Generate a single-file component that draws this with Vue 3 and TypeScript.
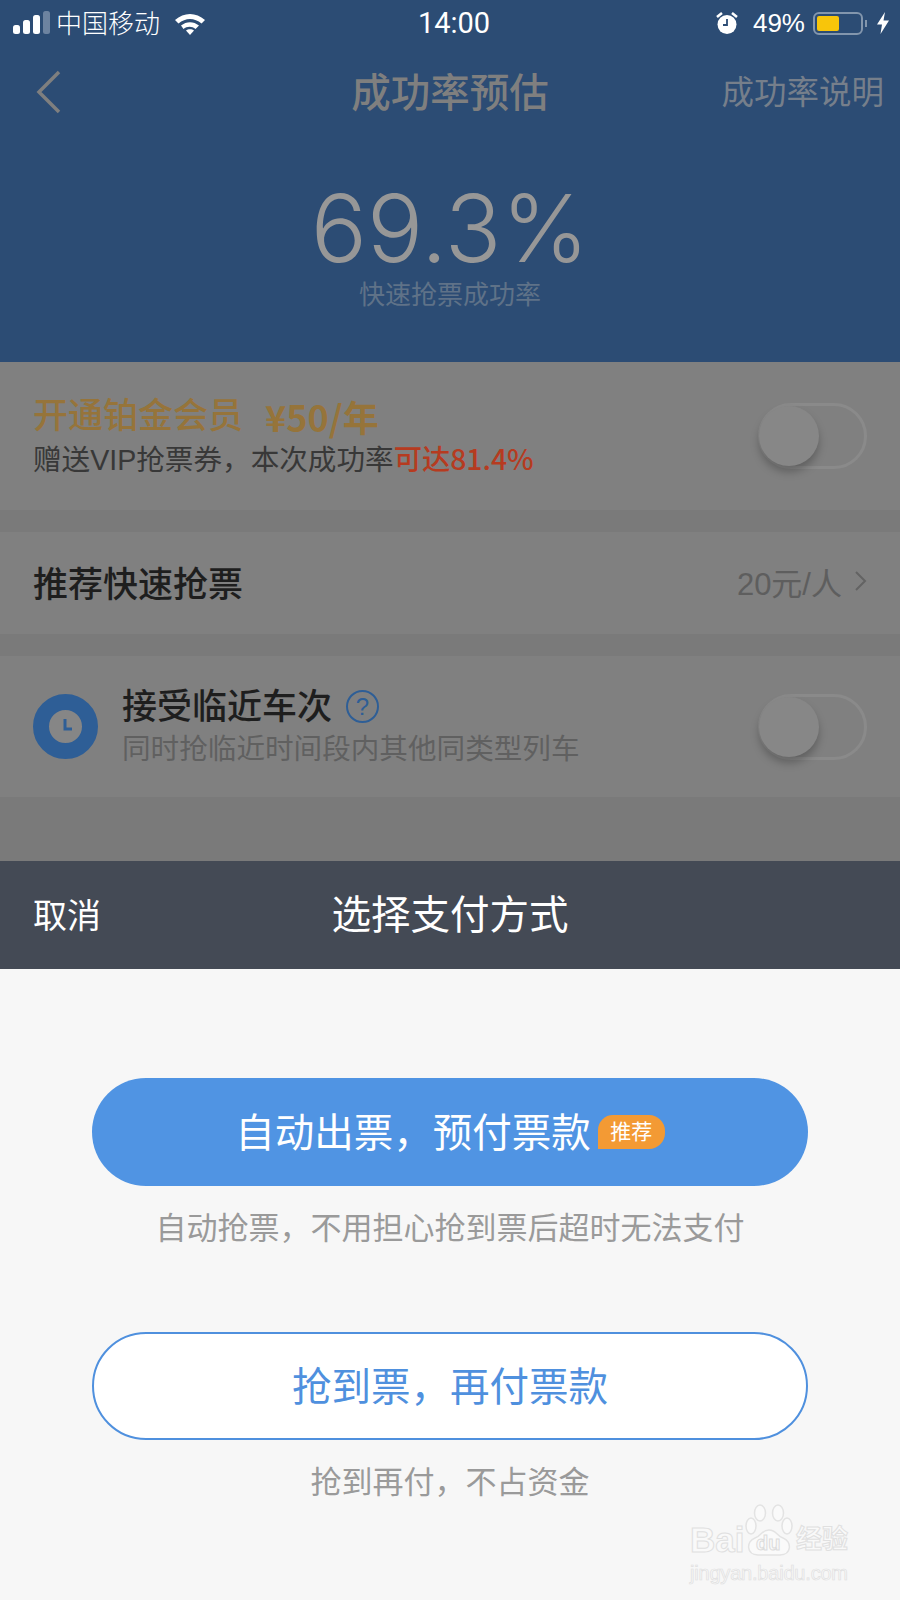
<script setup lang="ts">
const pawToes = [
  { cx: 15, cy: 9, rx: 5.5, ry: 8 },
  { cx: 33, cy: 9, rx: 5.5, ry: 8 },
  { cx: 6, cy: 22, rx: 5, ry: 8 },
  { cx: 42, cy: 22, rx: 5, ry: 8 },
]
</script>

<template>
  <div class="page">
    <header class="top">
      <div class="status">
        <div class="status__left">
          <svg class="signal" width="37" height="24" viewBox="0 0 37 24">
            <rect x="0" y="14" width="7" height="9" rx="2.5" fill="#fff" />
            <rect x="10" y="9" width="7" height="14" rx="2.5" fill="#fff" />
            <rect x="20" y="4" width="7" height="19" rx="2.5" fill="#fff" />
            <rect x="30" y="0" width="7" height="23" rx="2.5" fill="#6d83a0" />
          </svg>
          <span class="carrier">中国移动</span>
          <svg class="wifi" width="30" height="23" viewBox="0 0 30 23">
            <path d="M0 8C9 0 21 0 30 8l-3.500 3.500C19.500 5.500 10.500 5.500 3.500 11.500z" fill="#fff" />
            <path d="M6 13.500C11.500 9 18.500 9 24 13.500l-3.500 3.500c-3.500-3-8.500-3-12 0z" fill="#fff" />
            <path d="M11 18.500c2-1.800 6-1.800 8 0L15 23z" fill="#fff" />
          </svg>
        </div>
        <span class="clock">14:00</span>
        <div class="status__right">
          <svg width="24" height="24" viewBox="0 0 24 24">
            <circle cx="12" cy="13.500" r="9.500" fill="#fff" />
            <path d="M2 6l5-4M22 6l-5-4" stroke="#fff" stroke-width="2.600" />
            <path d="M12 8v6h-4" fill="none" stroke="#2c4c74" stroke-width="1.800" />
          </svg>
          <span class="percent">49%</span>
          <div class="battery"><div class="battery__fill" /></div>
          <span class="battery__nub" />
          <svg class="bolt" width="12" height="22" viewBox="0 0 12 22">
            <path d="M8 0L0 12.500h5L3.500 22 12 8.500H6.500z" fill="#fff" />
          </svg>
        </div>
      </div>

      <nav class="nav">
        <svg class="nav__back" width="26" height="44" viewBox="0 0 26 44">
          <path d="M23 2L3 22l20 20" fill="none" stroke="#7f7f7f" stroke-width="3.500" />
        </svg>
        <span class="nav__title">成功率预估</span>
        <span class="nav__link">成功率说明</span>
      </nav>

      <div class="hero">
        <div class="hero__value">69.3%</div>
        <div class="hero__label">快速抢票成功率</div>
      </div>
    </header>

    <section class="row row--vip">
      <div class="row__body">
        <div class="vip-title"><span>开通铂金会员</span><span class="vip-price">¥50/年</span></div>
        <div class="vip-sub">赠送VIP抢票券，本次成功率<span class="vip-hot">可达81.4%</span></div>
      </div>
      <div class="toggle"><div class="toggle__knob" /></div>
    </section>

    <section class="row row--quick">
      <div class="row__title">推荐快速抢票</div>
      <div class="quick-price">
        <span>20元/人</span>
        <svg width="13" height="22" viewBox="0 0 13 22">
          <path d="M2 2l9 9-9 9" fill="none" stroke="#636363" stroke-width="2" />
        </svg>
      </div>
    </section>

    <section class="row row--near">
      <div class="near-icon">
        <svg width="65" height="65" viewBox="0 0 65 65">
          <circle cx="32.500" cy="32.500" r="24.500" fill="#868686" stroke="#2e5e96" stroke-width="16" />
          <path d="M32 25v10h7" fill="none" stroke="#2e5e96" stroke-width="3" />
        </svg>
      </div>
      <div class="row__body">
        <div class="near-title">
          <span class="row__title">接受临近车次</span>
          <span class="help">?</span>
        </div>
        <div class="near-sub">同时抢临近时间段内其他同类型列车</div>
      </div>
      <div class="toggle"><div class="toggle__knob" /></div>
    </section>

    <div class="spacer" />

    <section class="sheet">
      <div class="sheet__head">
        <span class="sheet__cancel">取消</span>
        <span class="sheet__title">选择支付方式</span>
      </div>
      <div class="sheet__body">
        <button class="pay pay--primary">
          <span class="pay__text">自动出票，预付票款</span>
          <span class="pay__tag">推荐</span>
        </button>
        <p class="pay__hint">自动抢票，不用担心抢到票后超时无法支付</p>
        <button class="pay pay--outline"><span class="pay__text">抢到票，再付票款</span></button>
        <p class="pay__hint">抢到再付，不占资金</p>

        <div class="mark">
          <div class="mark__logo">
            <span class="mark__word">Bai</span>
            <svg class="mark__paw" width="48" height="52" viewBox="0 0 48 52">
              <ellipse
                v-for="toe in pawToes"
                :key="toe.cx"
                :cx="toe.cx"
                :cy="toe.cy"
                :rx="toe.rx"
                :ry="toe.ry"
                fill="#fafafa"
                stroke="#e3e3e3"
                stroke-width="1.500"
              />
              <path d="M24 26C16 26 17 32 10 34 1 37 1 51 13 51h22c12 0 12-14 3-17-7-2-6-8-14-8z" fill="#fafafa" stroke="#e3e3e3" stroke-width="1.500" />
            </svg>
            <span class="mark__du">du</span>
            <span class="mark__cn">经验</span>
          </div>
          <div class="mark__url">jingyan.baidu.com</div>
        </div>
      </div>
    </section>
  </div>
</template>

<style>
html,
body {
  margin: 0;
  background: #f7f7f7;
}
</style>

<style scoped>
.page {
  width: 900px;
  height: 1600px;
  display: flex;
  flex-direction: column;
  overflow: hidden;
  background: #7a7a7a;
  font-family: "Liberation Sans", "Noto Sans CJK SC", sans-serif;
}

.top {
  height: 362px;
  background: #2c4c74;
  display: flex;
  flex-direction: column;
}

.status {
  height: 46px;
  padding: 0 11px 0 13px;
  display: grid;
  grid-template-columns: 1fr auto 1fr;
  align-items: center;
  color: #fff;
  font-size: 26px;
}

.status__left,
.status__right {
  display: flex;
  align-items: center;
}

.status__right {
  justify-content: flex-end;
}

.carrier {
  margin: 0 0 4px 6px;
  font-weight: 300;
}

.wifi {
  margin-left: 15px;
}

.clock {
  margin-left: 6px;
  font-family: Roboto, sans-serif;
  font-size: 29px;
  font-weight: 400;
}

.percent {
  margin: 0 8px 0 14px;
  font-family: "Liberation Sans", sans-serif;
  font-size: 26px;
}

.battery {
  width: 50px;
  height: 23px;
  box-sizing: border-box;
  padding: 2px;
  border: 2px solid #8396ad;
  border-radius: 6px;
}

.battery__fill {
  width: 22px;
  height: 100%;
  border-radius: 2px;
  background: #f8c50a;
}

.battery__nub {
  width: 2px;
  height: 7px;
  margin-left: 2px;
  background: #8396ad;
}

.bolt {
  margin-left: 10px;
}

.nav {
  height: 92px;
  box-sizing: border-box;
  padding: 0 16px 6px 36px;
  display: flex;
  align-items: center;
  justify-content: space-between;
  position: relative;
}

.nav__back {
  margin-top: 6px;
}

.nav__title {
  position: absolute;
  left: 0;
  right: 0;
  text-align: center;
  font-size: 39.500px;
  font-weight: 500;
  color: #7f7f7f;
}

.nav__link {
  font-size: 32.500px;
  color: #767f8b;
}

.hero {
  text-align: center;
}

.hero__value {
  margin-top: 40px;
  font-family: Inter, sans-serif;
  font-size: 93.500px;
  font-weight: 300;
  line-height: 100px;
  color: #979797;
}

.hero__label {
  font-size: 26px;
  line-height: 34px;
  color: #5f7288;
}

.row {
  display: flex;
  align-items: center;
  background: #808080;
  padding: 0 33px;
}

.row__body {
  flex: 1;
}

.row__title {
  font-size: 35px;
  font-weight: 500;
  color: #1e1e1e;
}

.row--vip {
  height: 148px;
  margin-bottom: 22px;
}

.row--quick {
  height: 102px;
  padding-bottom: 4px;
  box-sizing: border-box;
  margin-bottom: 22px;
  justify-content: space-between;
}

.row--near {
  height: 141px;
}

.vip-title {
  display: flex;
  gap: 22px;
  font-size: 35px;
  font-weight: 500;
  line-height: 44px;
  color: #96743a;
}

.vip-price {
  font-family: "Noto Sans CJK SC", sans-serif;
  font-size: 36px;
  font-weight: 700;
}

.vip-sub {
  margin-top: 2px;
  font-size: 28.600px;
  line-height: 36px;
  color: #383838;
}

.vip-hot {
  font-family: "Noto Sans CJK SC", sans-serif;
  font-size: 28.300px;
  font-weight: 500;
  color: #b63b20;
}

.toggle {
  width: 109px;
  height: 66px;
  box-sizing: border-box;
  border: 3px solid #8a8a8a;
  border-radius: 33px;
  display: flex;
  align-items: center;
}

.toggle__knob {
  width: 60px;
  height: 60px;
  margin-left: -2px;
  border-radius: 50%;
  background: #878787;
  box-shadow: 0 6px 9px rgba(0, 0, 0, 0.25);
}

.quick-price {
  display: flex;
  align-items: center;
  gap: 12px;
  font-size: 31px;
  color: #5e5e5e;
}

.near-icon {
  display: flex;
  margin-right: 24px;
}

.near-title {
  display: flex;
  align-items: center;
  gap: 14px;
  line-height: 44px;
}

.help {
  width: 33px;
  height: 33px;
  box-sizing: border-box;
  border: 2px solid #2e5e96;
  border-radius: 50%;
  text-align: center;
  font-size: 24px;
  line-height: 29px;
  color: #2e5e96;
}

.near-sub {
  font-size: 28.600px;
  line-height: 40px;
  color: #606060;
}

.spacer {
  flex: 1;
}

.sheet {
  height: 739px;
  display: flex;
  flex-direction: column;
}

.sheet__head {
  height: 108px;
  box-sizing: border-box;
  padding: 0 0 4px 33px;
  display: flex;
  align-items: center;
  position: relative;
  background: #444a55;
  color: #fff;
}

.sheet__cancel {
  font-size: 34px;
}

.sheet__title {
  position: absolute;
  left: 0;
  right: 0;
  padding-bottom: 3px;
  text-align: center;
  font-size: 39.500px;
}

.sheet__body {
  flex: 1;
  padding: 109px 92px 0;
  position: relative;
  background: #f7f7f7;
}

.pay {
  width: 100%;
  height: 108px;
  box-sizing: border-box;
  border-radius: 54px;
  display: flex;
  align-items: center;
  justify-content: center;
  font-family: inherit;
  font-size: 39.500px;
}

.pay__text {
  margin-bottom: 5px;
}

.pay--primary {
  border: 0;
  gap: 7px;
  background: #5094e3;
  color: #fff;
}

.pay--outline {
  margin-top: 83px;
  border: 2px solid #4f90de;
  background: #fff;
  color: #4f90de;
}

.pay__tag {
  width: 67px;
  height: 34px;
  border-radius: 15px 16px 16px 0;
  background: #f39a34;
  font-size: 21px;
  line-height: 33px;
  text-align: center;
}

.pay__hint {
  margin: 23px 0 0;
  text-align: center;
  font-size: 31px;
  line-height: 40px;
  color: #9a9a9a;
}

.mark {
  position: absolute;
  left: 690px;
  top: 534px;
  width: 165px;
  color: #f9f9f9;
}

.mark__logo {
  display: flex;
  align-items: flex-end;
  height: 53px;
  position: relative;
}

.mark__word {
  width: 54px;
  font-family: "Liberation Sans", sans-serif;
  font-size: 35px;
  font-weight: 700;
  line-height: 32px;
  -webkit-text-stroke: 1px #e0e0e0;
}

.mark__paw {
  margin-left: 1px;
}

.mark__du {
  position: absolute;
  left: 66px;
  bottom: 2px;
  font-size: 20px;
  font-weight: 700;
  line-height: 22px;
  -webkit-text-stroke: 1px #dcdcdc;
}

.mark__cn {
  margin-left: 3px;
  font-size: 26px;
  font-weight: 700;
  line-height: 34px;
  -webkit-text-stroke: 1px #e0e0e0;
  white-space: nowrap;
}

.mark__url {
  margin-top: 5px;
  font-family: "Liberation Sans", sans-serif;
  font-size: 20px;
  letter-spacing: -0.200px;
  line-height: 24px;
  -webkit-text-stroke: 0.700px #e0e0e0;
  white-space: nowrap;
}
</style>
